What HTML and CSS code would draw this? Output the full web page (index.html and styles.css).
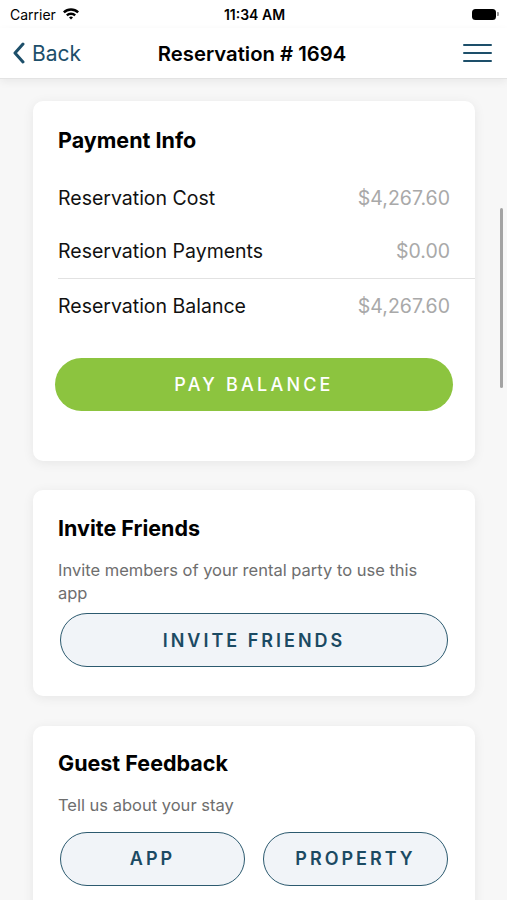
FILE: index.html
```html
<!DOCTYPE html>
<html lang="en">
<head>
    <meta charset="UTF-8">
    <meta name="viewport" content="width=device-width, initial-scale=1.0">
    <title>Reservation # 1694</title>
    <link rel="stylesheet" href="styles.css">
</head>
<body>
    <div class="phone">
        <div class="status-bar">
            <div class="carrier">
                Carrier
                <svg class="wifi" width="18" height="13" viewBox="0 0 18 13">
                    <path d="M1 4.6 A11.5 11.5 0 0 1 17 4.6 L15.3 6.3 A9 9 0 0 0 2.7 6.3 Z" fill="#000"/>
                    <path d="M4 7.6 A7 7 0 0 1 14 7.6 L12.3 9.3 A4.6 4.6 0 0 0 5.7 9.3 Z" fill="#000"/>
                    <path d="M7 10.6 A2.8 2.8 0 0 1 11 10.6 L9 12.6 Z" fill="#000"/>
                </svg>
            </div>
            <div class="clock">11:34 AM</div>
            <div class="battery">
                <span class="battery-body"></span>
                <span class="battery-tip"></span>
            </div>
        </div>

        <header class="nav-bar">
            <a class="back" href="#">
                <svg width="14" height="22" viewBox="0 0 14 22">
                    <path d="M11 2 L3 11 L11 20" fill="none" stroke="#1d4f6a" stroke-width="3" stroke-linecap="round" stroke-linejoin="round"/>
                </svg>
                Back
            </a>
            <h1 class="nav-title">Reservation # 1694</h1>
            <button class="menu" type="button">
                <span></span><span></span><span></span>
            </button>
        </header>

        <main class="content">
            <section class="card payment">
                <h2>Payment Info</h2>
                <div class="rows">
                    <div class="row"><span>Reservation Cost</span><span class="amount">$4,267.60</span></div>
                    <div class="row divided"><span>Reservation Payments</span><span class="amount">$0.00</span></div>
                    <div class="row"><span>Reservation Balance</span><span class="amount">$4,267.60</span></div>
                </div>
                <button class="pay-button" type="button">PAY BALANCE</button>
            </section>

            <section class="card invite">
                <h2>Invite Friends</h2>
                <p class="note">Invite members of your rental party to use this app</p>
                <button class="outline-button wide" type="button">INVITE FRIENDS</button>
            </section>

            <section class="card feedback">
                <h2>Guest Feedback</h2>
                <p class="note">Tell us about your stay</p>
                <div class="button-pair">
                    <button class="outline-button" type="button">APP</button>
                    <button class="outline-button" type="button">PROPERTY</button>
                </div>
            </section>
        </main>

        <div class="scroll-thumb"></div>
    </div>
</body>
</html>
```

FILE: styles.css
```css
body { margin: 0; font-family: Inter, "Noto Sans", sans-serif; background: #f7f7f7; }
.phone { position: relative; width: 507px; height: 900px; overflow: hidden; background: #f7f7f7; }

/* status bar */
.status-bar { height: 28px; background: #fff; display: flex; align-items: center; justify-content: space-between; padding: 0 8px 0 10px; font-size: 14px; color: #000; }
.carrier { display: flex; align-items: center; gap: 6px; width: 120px; }
.wifi { margin-top: -2px; }
.clock { font-weight: 600; }
.battery { width: 120px; display: flex; justify-content: flex-end; align-items: center; }
.battery-body { width: 24px; height: 11px; border-radius: 3.5px; background: #000; }
.battery-tip { width: 2px; height: 4px; margin-left: 1px; border-radius: 0 1px 1px 0; background: #999; }

/* nav bar */
.nav-bar { height: 50px; background: #fff; border-bottom: 1px solid #e3e3e3; box-shadow: 0 3px 8px rgba(0, 0, 0, 0.06); display: flex; align-items: center; justify-content: space-between; padding: 0 15px 0 12px; position: relative; z-index: 1; }
.back { display: flex; align-items: center; gap: 6px; width: 110px; color: #1d4f6a; text-decoration: none; font-size: 21px; }
.nav-title { margin: 0; font-size: 20.3px; font-weight: 600; color: #000; }
.menu { width: 110px; height: 30px; border: none; background: none; padding: 0; display: flex; flex-direction: column; align-items: flex-end; justify-content: center; gap: 5.5px; }
.menu span { display: block; width: 29px; height: 2.5px; background: #1d4f6a; border-radius: 1px; }

/* cards */
.content { padding: 22px 32px 0 33px; display: flex; flex-direction: column; gap: 29.5px; }
.card { background: #fff; border-radius: 10px; box-shadow: 0 2px 12px rgba(0, 0, 0, 0.07); padding: 27px 25px 50px; }
.card h2 { margin: 0; font-size: 21.5px; line-height: 24px; font-weight: 700; color: #000; }

.rows { margin: 19px -25px 0 0; }
.row { height: 53.5px; display: flex; align-items: center; justify-content: space-between; padding-right: 25px; font-size: 19.5px; color: #111; }
.row.divided { border-bottom: 1px solid #e2e2e2; }
.amount { color: #a9a9a9; }

.pay-button { display: block; width: 398px; height: 53px; margin: 25px 0 0 -3px; border: none; border-radius: 27px; background: #8cc43f; color: #fff; font-family: inherit; font-size: 18px; font-weight: 500; letter-spacing: 3.2px; }

.invite { padding: 26px 25px 29px; }
.feedback { padding: 25px 25px 40px; }
.note { margin: 19px 0 0; max-width: 370px; font-size: 16.5px; line-height: 23px; color: #6e6e6e; }

.outline-button { height: 54px; border: 1.5px solid #2c5a6f; border-radius: 27px; background: #f1f4f8; color: #1b4a63; font-family: inherit; font-size: 18px; font-weight: 600; letter-spacing: 3px; }
.outline-button.wide { display: block; width: 388px; margin: 8px 0 0 2px; }
.button-pair { display: flex; gap: 18px; margin: 15px 0 0 2px; }
.button-pair .outline-button { width: 185px; }

.scroll-thumb { position: absolute; left: 500px; top: 208px; width: 3px; height: 180px; border-radius: 2px; background: #a3a3a3; }
```
